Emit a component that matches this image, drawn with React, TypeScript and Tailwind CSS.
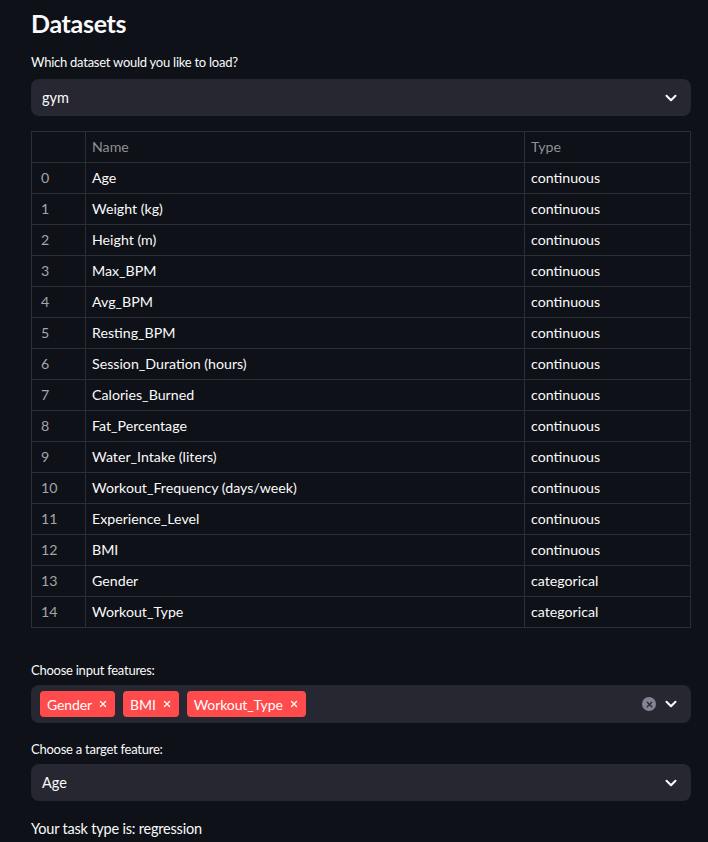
import { ChevronDown, X } from "lucide-react";

const rows: [string, string][] = [
  ["Age", "continuous"],
  ["Weight (kg)", "continuous"],
  ["Height (m)", "continuous"],
  ["Max_BPM", "continuous"],
  ["Avg_BPM", "continuous"],
  ["Resting_BPM", "continuous"],
  ["Session_Duration (hours)", "continuous"],
  ["Calories_Burned", "continuous"],
  ["Fat_Percentage", "continuous"],
  ["Water_Intake (liters)", "continuous"],
  ["Workout_Frequency (days/week)", "continuous"],
  ["Experience_Level", "continuous"],
  ["BMI", "continuous"],
  ["Gender", "categorical"],
  ["Workout_Type", "categorical"],
];

const Select = ({ value }: { value: string }) => (
  <div className="flex items-center h-[37px] rounded-lg bg-[#262730] pl-[11px] pr-[11px]">
    <span className="flex-1 text-[14.5px] text-[#fafafa]">{value}</span>
    <ChevronDown className="h-[18px] w-[18px] text-[#fafafa]" strokeWidth={2.75} />
  </div>
);

const Tag = ({ label }: { label: string }) => (
  <div className="flex items-center gap-[6px] h-[26px] rounded bg-[#ff4b4b] pl-[7px] pr-[7px] text-[14px] tracking-[-0.1px] text-white">
    <span>{label}</span>
    <X className="h-[10px] w-[10px]" strokeWidth={3} />
  </div>
);

export default function App() {
  return (
    <div
      className="min-h-screen bg-[#0e1117] text-[#fafafa] pl-[31px] pr-[17px]"
      style={{ fontFamily: "Lato, 'Noto Sans', sans-serif" }}
    >
      <h1 className="pt-[6px] text-[25px] font-bold leading-[34px] tracking-[-0.3px]">Datasets</h1>

      <div className="mt-[13px] text-[13px] leading-[18px] tracking-[-0.25px]">
        Which dataset would you like to load?
      </div>
      <div className="mt-[8px]">
        <Select value="gym" />
      </div>

      <table className="mt-[15px] w-full border-collapse border border-[#2c2e35] text-[14.2px]">
        <thead>
          <tr className="h-[31px] text-[#8e9096]">
            <th className="w-[54px] border border-[#2c2e35]"></th>
            <th className="border border-[#2c2e35] pl-[6px] text-left font-normal">Name</th>
            <th className="w-[166px] border border-[#2c2e35] pl-[6px] text-left font-normal">Type</th>
          </tr>
        </thead>
        <tbody>
          {rows.map(([name, type], i) => (
            <tr key={name} className="h-[31px]">
              <td className="border border-[#2c2e35] pl-[9px] text-[#a3a5ab]">{i}</td>
              <td className="border border-[#2c2e35] pl-[6px]">{name}</td>
              <td className="border border-[#2c2e35] pl-[6px]">{type}</td>
            </tr>
          ))}
        </tbody>
      </table>

      <div className="mt-[33px] text-[13px] leading-[18px] tracking-[-0.25px]">Choose input features:</div>
      <div className="mt-[6px] flex items-center h-[38px] rounded-lg bg-[#262730] pl-[9px] pr-[11px]">
        <div className="flex flex-1 gap-[8px]">
          <Tag label="Gender" />
          <Tag label="BMI" />
          <Tag label="Workout_Type" />
        </div>
        <div className="mr-[6px] flex h-[14px] w-[14px] items-center justify-center rounded-full bg-[#808495]">
          <X className="h-[9px] w-[9px] text-[#262730]" strokeWidth={3.5} />
        </div>
        <ChevronDown className="h-[18px] w-[18px] text-[#fafafa]" strokeWidth={2.75} />
      </div>

      <div className="mt-[17px] text-[13px] leading-[18px] tracking-[-0.25px]">Choose a target feature:</div>
      <div className="mt-[6px]">
        <Select value="Age" />
      </div>

      <div className="mt-[18px] text-[14.5px] leading-[20px] tracking-[-0.2px]">Your task type is: regression</div>
    </div>
  );
}
